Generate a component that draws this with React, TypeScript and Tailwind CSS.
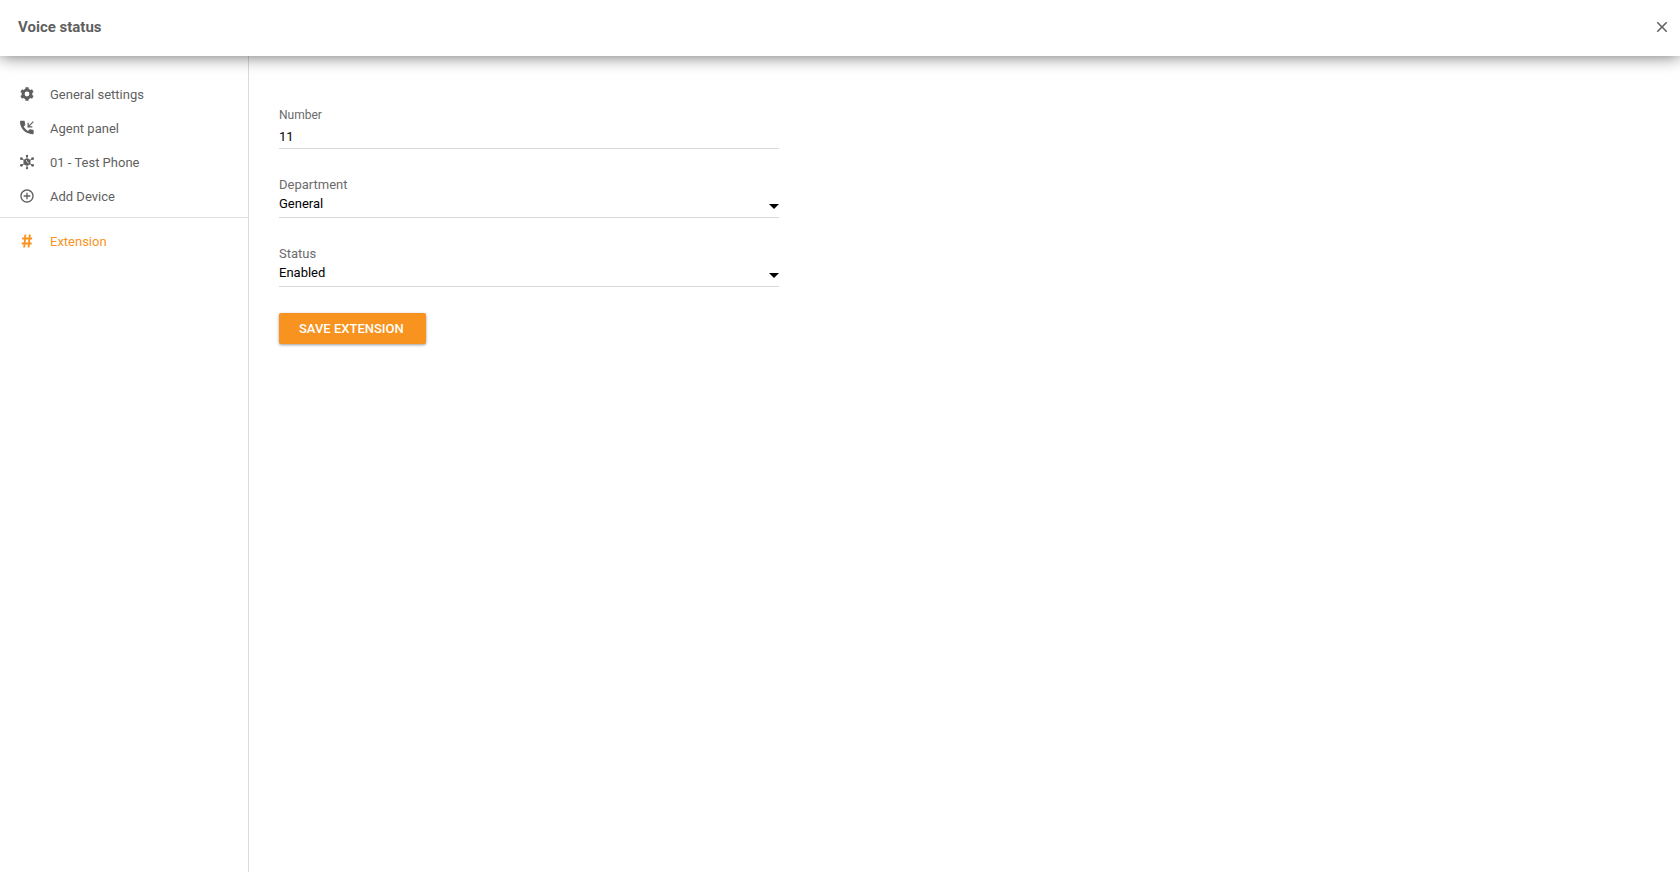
import { useState } from 'react';
import type { ReactNode } from 'react';
import { MdAddCircleOutline, MdClose } from 'react-icons/md';
import { clsx } from 'clsx';

function GearIcon() {
  return (
    <svg viewBox="0 0 16 16" className="size-4" fill="none" stroke="currentColor" aria-hidden="true">
      <circle cx="8" cy="8" r="3.9" strokeWidth="3" />
      <path
        d="M8 1.3v2.2M8 12.5v2.2M2.2 4.65l1.9 1.1M11.9 10.25l1.9 1.1M2.2 11.35l1.9-1.1M11.9 5.75l1.9-1.1"
        strokeWidth="3.2"
      />
    </svg>
  );
}

function PhoneIcon() {
  return (
    <svg viewBox="0 0 24 24" className="size-4" fill="currentColor" aria-hidden="true">
      <path d="M20.500 14.500c-1.300 0-2.600-.2-3.800-.6-.4-.1-.8 0-1.100.3l-2.200 2.200c-2.800-1.400-5-3.700-6.500-6.500l2.200-2.200c.3-.3.4-.7.200-1.100C8.900 5.400 8.700 4.100 8.700 2.800c0-.8-.5-1.500-1.300-1.500H3c-.8 0-1.500.7-1.500 1.500 0 10 8.500 18.500 18.500 18.500 1 0 2-.7 2-1.500v-4c0-.8-.7-1.300-1.500-1.300z" />
      <path d="M21.500 2.500l-7 7M13.700 4v6.300H20" fill="none" stroke="currentColor" strokeWidth="1.8" />
    </svg>
  );
}

function DeviceIcon() {
  return (
    <svg viewBox="0 0 16 16" className="size-4" fill="currentColor" stroke="currentColor" aria-hidden="true">
      <path d="M8 2v12M2.4 4.7l11.2 6.6M13.6 4.7l-11.2 6.600" strokeWidth="1" />
      <circle cx="8" cy="1.9" r="1.2" stroke="none" />
      <circle cx="8" cy="14.1" r="1.2" stroke="none" />
      <circle cx="2.4" cy="4.7" r="1.4" stroke="none" />
      <circle cx="13.6" cy="4.7" r="1.4" stroke="none" />
      <circle cx="2.4" cy="11.3" r="1.4" stroke="none" />
      <circle cx="13.6" cy="11.3" r="1.4" stroke="none" />
      <circle cx="8" cy="8" r="3.6" stroke="none" />
      <path d="M7.4 6c.1 1.600 1 2.700 2.600 3.100" fill="none" stroke="white" strokeWidth="0.7" />
    </svg>
  );
}

function HashIcon() {
  return (
    <svg viewBox="0 0 16 16" className="size-4" fill="none" stroke="currentColor" aria-hidden="true">
      <path d="M6.4 1.500l-1.200 13M10.800 1.500l-1.200 13" strokeWidth="1.9" />
      <path d="M3.100 5.500h10M2.700 10.500h10" strokeWidth="1.8" />
    </svg>
  );
}

type NavItemProps = {
  icon: ReactNode;
  label: string;
  active?: boolean;
};

function NavItem({ icon, label, active }: NavItemProps) {
  return (
    <li>
      <a
        href="#"
        className={clsx(
          'flex h-[34px] items-center pl-[18px] text-[13px]',
          active ? 'text-[#f7931e]' : 'text-[#5f5f5f]'
        )}
      >
        <span className="mr-3.5 flex w-[18px] justify-center pb-0.5">{icon}</span>
        {label}
      </a>
    </li>
  );
}

type SelectFieldProps = {
  id: string;
  label: string;
  options: string[];
};

function SelectField({ id, label, options }: SelectFieldProps) {
  return (
    <div className="mt-7 border-b border-[#dadada]">
      <label htmlFor={id} className="block text-[13px] leading-4 text-[#6b6b6b]">
        {label}
      </label>
      <div className="relative">
        <select
          id={id}
          className="block h-6 w-full appearance-none bg-transparent pb-0.5 text-[13px] text-black outline-none"
        >
          {options.map(option => (
            <option key={option}>{option}</option>
          ))}
        </select>
        <svg
          viewBox="0 0 10 5"
          className="pointer-events-none absolute top-[11px] right-0 h-[5px] w-2.5"
          aria-hidden="true"
        >
          <path d="M0 0h10L5 5z" />
        </svg>
      </div>
    </div>
  );
}

export default function App() {
  const [number, setNumber] = useState('11');

  return (
    <div className="flex min-h-screen flex-col bg-white font-[Roboto,sans-serif]">
      {/* Header */}
      <header className="relative z-10 flex h-14 items-center justify-between bg-white pr-[9px] pb-0.5 pl-[18px] text-[#5f5f5f] shadow-[0_0_16px_rgba(0,0,0,0.6)]">
        <h1 className="text-[15px] font-bold">Voice status</h1>
        <button type="button" aria-label="Close">
          <MdClose className="size-[18px]" />
        </button>
      </header>

      <div className="flex grow">
        {/* Sidebar */}
        <nav className="w-[249px] shrink-0 border-r border-[#dadada] pt-[22px]">
          <ul className="border-b border-[#e0e0e0] pb-[3px]">
            <NavItem icon={<GearIcon />} label="General settings" />
            <NavItem icon={<PhoneIcon />} label="Agent panel" />
            <NavItem icon={<DeviceIcon />} label="01 - Test Phone" />
            <NavItem icon={<MdAddCircleOutline className="size-4" />} label="Add Device" />
          </ul>
          <ul className="pt-[7px]">
            <NavItem icon={<HashIcon />} label="Extension" active />
          </ul>
        </nav>

        {/* Extension form */}
        <main className="grow px-[30px] pt-[51px]">
          <form className="max-w-[500px]" onSubmit={e => e.preventDefault()}>
            <div className="border-b border-[#dadada]">
              <label htmlFor="number" className="block text-xs leading-4 text-[#6b6b6b]">
                Number
              </label>
              <input
                id="number"
                value={number}
                onChange={e => setNumber(e.target.value)}
                className="block h-[25px] w-full bg-transparent pt-0.5 text-[13px] text-black outline-none"
              />
            </div>
            <SelectField id="department" label="Department" options={['General']} />
            <SelectField id="status" label="Status" options={['Enabled', 'Disabled']} />
            <button
              type="submit"
              className="mt-[26px] h-[31px] rounded-xs bg-[#f7931e] pr-[22px] pl-5 text-[13px] font-medium text-white uppercase shadow-[0_1px_3px_rgba(0,0,0,0.4)]"
            >
              Save extension
            </button>
          </form>
        </main>
      </div>
    </div>
  );
}
